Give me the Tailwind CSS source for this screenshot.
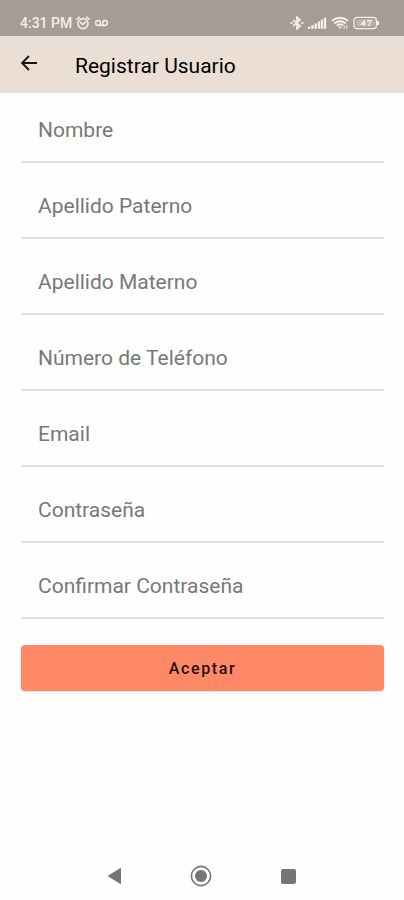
<!DOCTYPE html>
<html lang="es">
<head>
  <meta charset="UTF-8">
  <meta name="viewport" content="width=device-width, initial-scale=1.0">
  <title>Registrar Usuario</title>
  <script src="https://cdn.jsdelivr.net/npm/@tailwindcss/browser@4"></script>
</head>
<body class="min-h-screen flex flex-col bg-[#fefefe] font-[Roboto,sans-serif]">

  <!-- Status bar -->
  <div class="h-9 pl-5 pr-6 pt-2.5 flex items-center justify-between bg-[#a59c95] text-[#f3efec]">
    <div class="flex items-center gap-1">
      <span class="text-sm leading-4 font-medium">4:31 PM</span>
      <svg class="w-[14px] h-[14px]" viewBox="0 0 14 14" fill="none" stroke="currentColor" stroke-width="1.6" stroke-linecap="round">
        <circle cx="7" cy="7.6" r="5"/>
        <path d="M1 3.2 3.4 1.2M13 3.2 10.6 1.2M4.8 6.6 6.8 8.6 9.2 6.4"/>
      </svg>
      <svg class="w-[15px] h-[8px]" viewBox="0 0 15 8" fill="none" stroke="currentColor" stroke-width="1.5">
        <circle cx="4" cy="4" r="2.4"/>
        <circle cx="11" cy="4" r="2.4"/>
        <path d="M4 6.4h7"/>
      </svg>
    </div>
    <div class="flex items-center gap-1">
      <svg class="w-[14px] h-[14px]" viewBox="0 0 14 14" fill="none" stroke="currentColor" stroke-width="1.8">
        <path d="M3.2 3.8 10 10 7 12.8V1.2L10 4 3.2 10.2"/>
        <path d="M.6 7h2M11.4 7h2"/>
      </svg>
      <svg class="w-[19px] h-[14px]" viewBox="0 0 19 14" fill="currentColor">
        <rect x="0" y="10.6" width="2.4" height="2.2"/>
        <rect x="3.3" y="9.2" width="2.4" height="3.6"/>
        <rect x="6.6" y="7.4" width="2.4" height="5.4"/>
        <rect x="9.9" y="5.4" width="2.4" height="7.4"/>
        <rect x="13" y="3.4" width="2.2" height="9.4"/>
        <rect x="16" y="1.6" width="2.2" height="11.2"/>
      </svg>
      <svg class="w-[18px] h-[14px]" viewBox="0 0 18 14" fill="none" stroke="currentColor" stroke-width="2">
        <path d="M1 4.8Q9-1.4 17 4.8M3.4 7.4Q9 2.8 14.6 7.4M5.8 9.8Q9 7 12 9.4"/>
        <path d="M7.2 10.8 9 13l1.8-2.2Q9 9.6 7.2 10.8z" fill="currentColor" stroke="none"/>
        <path d="M13.2 12.8V9.2M15.8 12.8V9.2" stroke-width="1.1"/>
      </svg>
      <svg class="w-[27px] h-[14px]" viewBox="0 0 27 14" fill="none" stroke="currentColor" stroke-width="1.3">
        <rect x="1" y="1.4" width="22.4" height="11.2" rx="3"/>
        <path d="M25 5v4" stroke-width="2"/>
        <rect x="3" y="3.4" width="18.4" height="7.2" rx="1.4" stroke="none" fill="currentColor" fill-opacity=".3"/>
        <path d="M11.4 4v6M12.2 4.4 8.4 8h4M14 4.5h4L15.6 10"/>
      </svg>
    </div>
  </div>

  <!-- App bar -->
  <header class="h-[57px] pl-5 flex items-center gap-9 bg-[#ebdfd5] text-[#191512]">
    <button type="button" aria-label="Volver" class="w-[19px] pb-1">
      <svg class="w-[19px] h-[18px]" viewBox="0 0 19 18" fill="none" stroke="currentColor" stroke-width="1.8">
        <path d="M17 9H2M9 2 2 9l7 7"/>
      </svg>
    </button>
    <h1 class="pt-0.5 text-[21px] leading-7 text-black">Registrar Usuario</h1>
  </header>

  <!-- Form -->
  <main class="flex-1 pl-[21px] pr-5">
    <form class="flex flex-col">
      <input type="text" aria-label="Nombre" placeholder="Nombre" class="h-[70px] px-[17px] pt-1.5 border-b-2 border-[#e1e1e1] text-[21px] text-gray-800 placeholder:text-[#787878] outline-none">
      <input type="text" aria-label="Apellido Paterno" placeholder="Apellido Paterno" class="h-[76px] px-[17px] pt-3 border-b-2 border-[#e1e1e1] text-[21px] text-gray-800 placeholder:text-[#787878] outline-none">
      <input type="text" aria-label="Apellido Materno" placeholder="Apellido Materno" class="h-[76px] px-[17px] pt-3 border-b-2 border-[#e1e1e1] text-[21px] text-gray-800 placeholder:text-[#787878] outline-none">
      <input type="tel" aria-label="Número de Teléfono" placeholder="Número de Teléfono" class="h-[76px] px-[17px] pt-3 border-b-2 border-[#e1e1e1] text-[21px] text-gray-800 placeholder:text-[#787878] outline-none">
      <input type="email" aria-label="Email" placeholder="Email" class="h-[76px] px-[17px] pt-3 border-b-2 border-[#e1e1e1] text-[21px] text-gray-800 placeholder:text-[#787878] outline-none">
      <input type="password" aria-label="Contraseña" placeholder="Contraseña" class="h-[76px] px-[17px] pt-3 border-b-2 border-[#e1e1e1] text-[21px] text-gray-800 placeholder:text-[#787878] outline-none">
      <input type="password" aria-label="Confirmar Contraseña" placeholder="Confirmar Contraseña" class="h-[76px] px-[17px] pt-3 border-b-2 border-[#e1e1e1] text-[21px] text-gray-800 placeholder:text-[#787878] outline-none">
      <button type="submit" class="mt-[26px] h-[46px] pt-0.5 rounded bg-[#ff8966] text-[#21120d] text-base font-medium tracking-widest shadow">Aceptar</button>
    </form>
  </main>

  <!-- System navigation -->
  <nav class="h-12 pl-[70px] pr-[72px] flex items-center justify-between text-[#757575]">
    <button type="button" aria-label="Atrás" class="w-[88px] flex justify-center">
      <svg class="w-[14px] h-[18px]" viewBox="0 0 14 18" fill="currentColor"><path d="M.5 9 13 1.2Q14 .6 14 1.8v14.4q0 1.2-1 .6z"/></svg>
    </button>
    <button type="button" aria-label="Inicio" class="w-[88px] flex justify-center">
      <svg class="w-[22px] h-[22px]" viewBox="0 0 22 22"><circle cx="11" cy="11" r="9.6" fill="none" stroke="currentColor" stroke-width="1.6"/><circle cx="11" cy="11" r="6" fill="currentColor"/></svg>
    </button>
    <button type="button" aria-label="Recientes" class="w-[88px] flex justify-center">
      <svg class="w-[15px] h-[15px]" viewBox="0 0 15 15" fill="currentColor"><rect width="15" height="15" rx="2"/></svg>
    </button>
  </nav>
</body>
</html>
